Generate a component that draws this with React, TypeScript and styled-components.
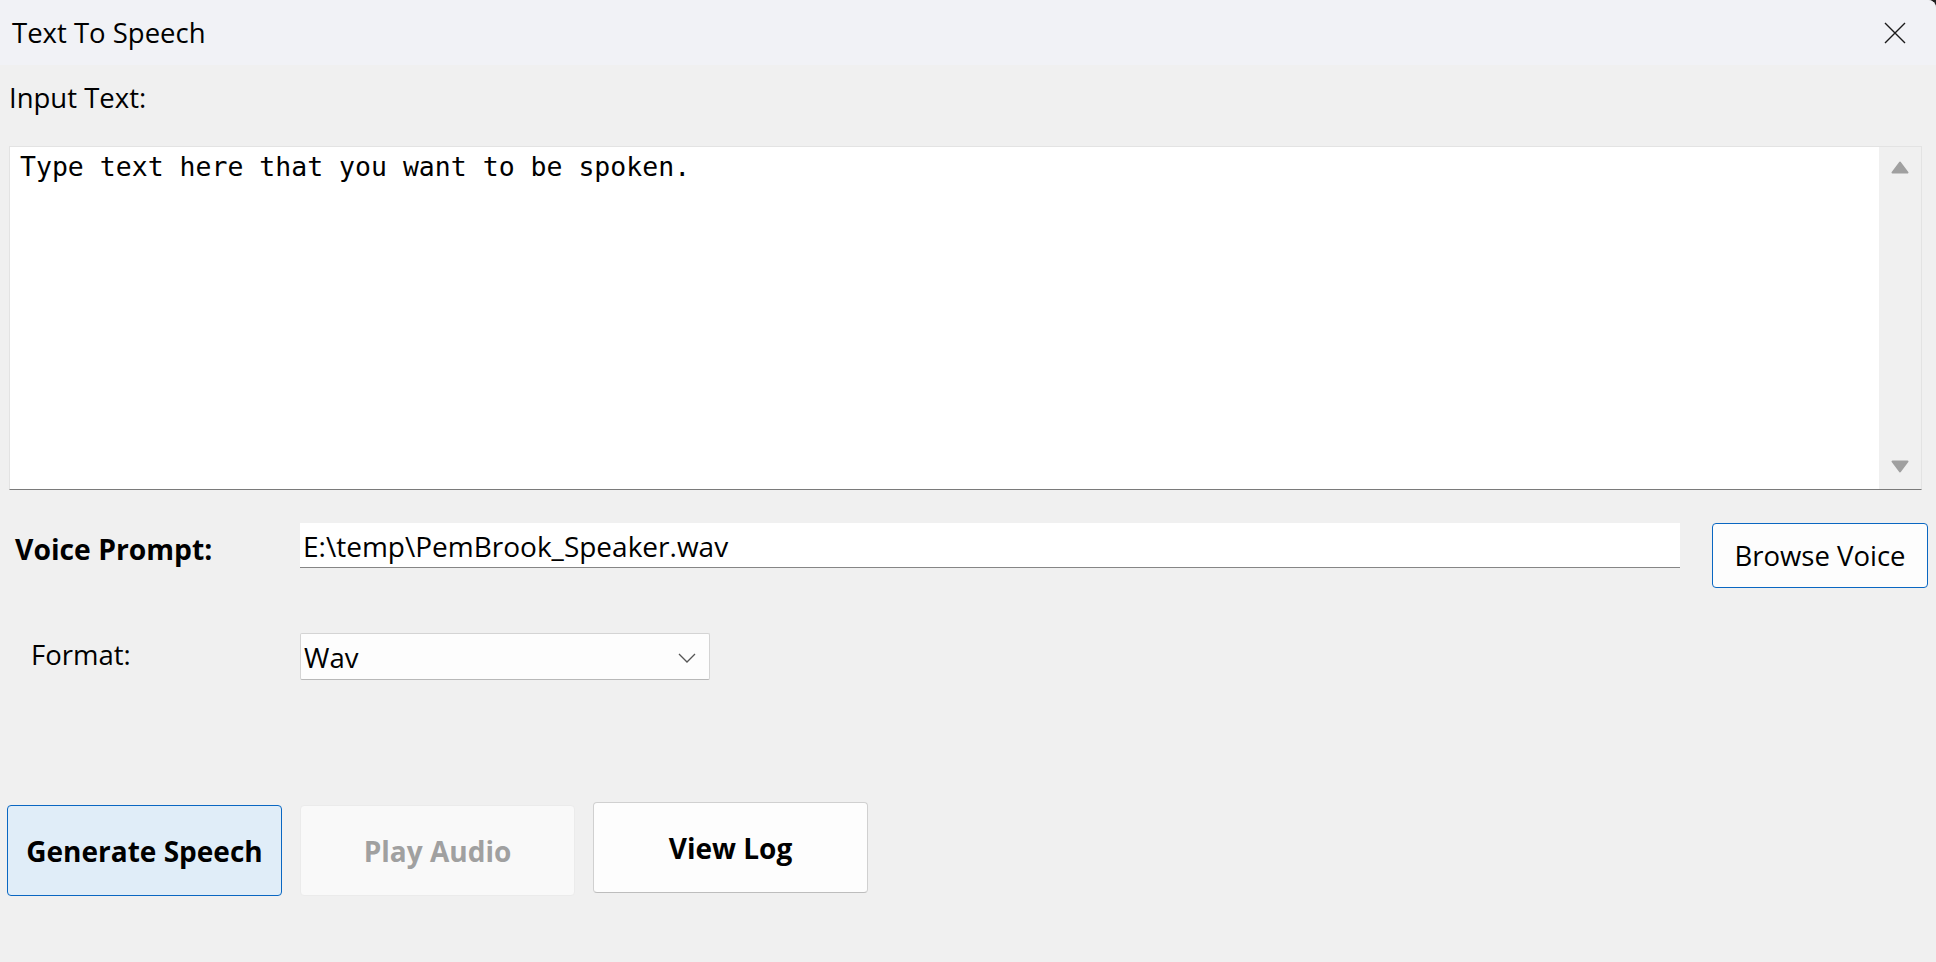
import {FC} from "react";
import styled, {createGlobalStyle} from "styled-components";

const GlobalStyle = createGlobalStyle`
  html, body {
    margin: 0;
    padding: 0;
    background: #202020;
  }
  body {
    font-family: "Open Sans", "Noto Sans", sans-serif;
    color: #000000;
  }
`

const StyledWindow = styled.div`
  display: flex;
  flex-direction: column;
  height: 100vh;
  background: #f0f0f0;
  border-top-right-radius: 8px;
  overflow: hidden;
`
const StyledTitleBar = styled.div`
  display: flex;
  align-items: center;
  justify-content: space-between;
  height: 65px;
  flex-shrink: 0;
  padding-left: 12px;
  background: #f1f2f6;
  font-size: 27.5px;
  line-height: 1;
`
const StyledCloseBtn = styled.div`
  display: flex;
  align-items: center;
  justify-content: center;
  width: 82px;
  height: 65px;
`
const StyledContent = styled.div`
  display: flex;
  flex-direction: column;
  padding: 0 8px 0 9px;
`
const StyledLabel = styled.div<{ $bold?: boolean; $indent?: number; $width?: number; $top?: number }>`
  flex-shrink: 0;
  width: ${p => p.$width ? `${p.$width}px` : "auto"};
  padding-left: ${p => p.$indent ?? 0}px;
  padding-top: ${p => p.$top ?? 0}px;
  box-sizing: border-box;
  font-size: ${p => p.$bold ? 28.3 : 27.5}px;
  font-weight: ${p => p.$bold ? 700 : 400};
  line-height: 1.2;
`
const StyledInputLabelRow = styled.div`
  padding-top: 16px;
  height: 81px;
  box-sizing: border-box;
`
const StyledTextBox = styled.div`
  display: flex;
  height: 344px;
  margin-right: 6px;
  background: #ffffff;
  border: 1px solid #e3e3e3;
  border-bottom: 1px solid #7a7a7a;
  box-sizing: border-box;
`
const StyledTextArea = styled.textarea`
  flex: 1;
  border: none;
  outline: none;
  resize: none;
  background: transparent;
  padding: 4px 10px;
  margin: 0;
  font-family: "DejaVu Sans Mono", "Liberation Mono", monospace;
  font-size: 26.5px;
  line-height: 1.2;
  color: #000000;
  overflow: hidden;
`
const StyledScrollTrack = styled.div`
  display: flex;
  flex-direction: column;
  justify-content: space-between;
  align-items: center;
  width: 42px;
  background: #f0f0f0;
  padding: 14px 0 16px;
  box-sizing: border-box;
`
const StyledRow = styled.div<{ $top: number; $height: number }>`
  display: flex;
  align-items: flex-start;
  margin-top: ${p => p.$top}px;
  height: ${p => p.$height}px;
`
const StyledPathInput = styled.div`
  width: 1380px;
  height: 45px;
  box-sizing: border-box;
  background: #ffffff;
  border-bottom: 1px solid #868686;
  padding: 4px 0 0 3px;
  font-size: 28px;
  line-height: 38px;
  white-space: nowrap;
`
const StyledBrowseBtn = styled.button`
  width: 216px;
  height: 65px;
  margin-left: 32px;
  background: #fdfdfd;
  border: 1px solid #0a67c2;
  border-radius: 4px;
  font-family: inherit;
  font-size: 27.5px;
  color: #000000;
  padding: 0;
`
const StyledSelect = styled.div`
  display: flex;
  align-items: center;
  justify-content: space-between;
  width: 410px;
  height: 47px;
  box-sizing: border-box;
  background: #fdfdfd;
  border: 1px solid #d4d4d4;
  border-bottom-color: #b8b8b8;
  border-radius: 2px;
  padding: 2px 13px 0 3px;
  font-size: 27.5px;
`
const StyledActions = styled.div`
  display: flex;
  align-items: flex-start;
  gap: 18px;
  margin-top: 122px;
  margin-left: -2px;
`
const StyledActionBtn = styled.button<{ $variant: "primary" | "disabled" | "plain" }>`
  width: 275px;
  height: 91px;
  margin-top: ${p => p.$variant === "plain" ? 0 : 3}px;
  padding: 0;
  border-radius: 4px;
  font-family: inherit;
  font-size: 28px;
  font-weight: 700;
  background: ${p => p.$variant === "primary" ? "#e0edf8" : p.$variant === "disabled" ? "#f9f9f9" : "#fdfdfd"};
  border: 1px solid ${p => p.$variant === "primary" ? "#0a67c2" : p.$variant === "disabled" ? "#ebebeb" : "#d0d0d0"};
  border-bottom-color: ${p => p.$variant === "plain" ? "#bdbdbd" : undefined};
  color: ${p => p.$variant === "disabled" ? "#a0a0a0" : "#000000"};
`

const App: FC = () => {
    return (
        <StyledWindow>
            <GlobalStyle/>
            <StyledTitleBar>
                <span>Text To Speech</span>
                <StyledCloseBtn>
                    <svg width="22" height="22" viewBox="0 0 22 22">
                        <path d="M1 1 L21 21 M21 1 L1 21" stroke="#1a1a1a" strokeWidth="1.4" fill="none"/>
                    </svg>
                </StyledCloseBtn>
            </StyledTitleBar>
            <StyledContent>
                <StyledInputLabelRow>
                    <StyledLabel>Input Text:</StyledLabel>
                </StyledInputLabelRow>
                <StyledTextBox>
                    <StyledTextArea readOnly value="Type text here that you want to be spoken."/>
                    <StyledScrollTrack>
                        <svg width="18" height="13" viewBox="0 0 18 13">
                            <path d="M9 1.5 L16.5 11.5 L1.5 11.5 Z" fill="#a0a0a0" stroke="#a0a0a0" strokeWidth="2"
                                  strokeLinejoin="round"/>
                        </svg>
                        <svg width="18" height="13" viewBox="0 0 18 13">
                            <path d="M1.5 1.5 L16.5 1.5 L9 11.5 Z" fill="#a0a0a0" stroke="#a0a0a0" strokeWidth="2"
                                  strokeLinejoin="round"/>
                        </svg>
                    </StyledScrollTrack>
                </StyledTextBox>
                <StyledRow $top={33} $height={65}>
                    <StyledLabel $bold $indent={6} $width={291} $top={10}>Voice Prompt:</StyledLabel>
                    <StyledPathInput>E:\temp\PemBrook_Speaker.wav</StyledPathInput>
                    <StyledBrowseBtn>Browse Voice</StyledBrowseBtn>
                </StyledRow>
                <StyledRow $top={45} $height={47}>
                    <StyledLabel $indent={22} $width={291} $top={5}>Format:</StyledLabel>
                    <StyledSelect>
                        <span>Wav</span>
                        <svg width="18" height="10" viewBox="0 0 18 10">
                            <path d="M1 1 L9 9 L17 1" stroke="#555555" strokeWidth="1.3" fill="none"/>
                        </svg>
                    </StyledSelect>
                </StyledRow>
                <StyledActions>
                    <StyledActionBtn $variant="primary">Generate Speech</StyledActionBtn>
                    <StyledActionBtn $variant="disabled">Play Audio</StyledActionBtn>
                    <StyledActionBtn $variant="plain">View Log</StyledActionBtn>
                </StyledActions>
            </StyledContent>
        </StyledWindow>
    )
}

export default App
